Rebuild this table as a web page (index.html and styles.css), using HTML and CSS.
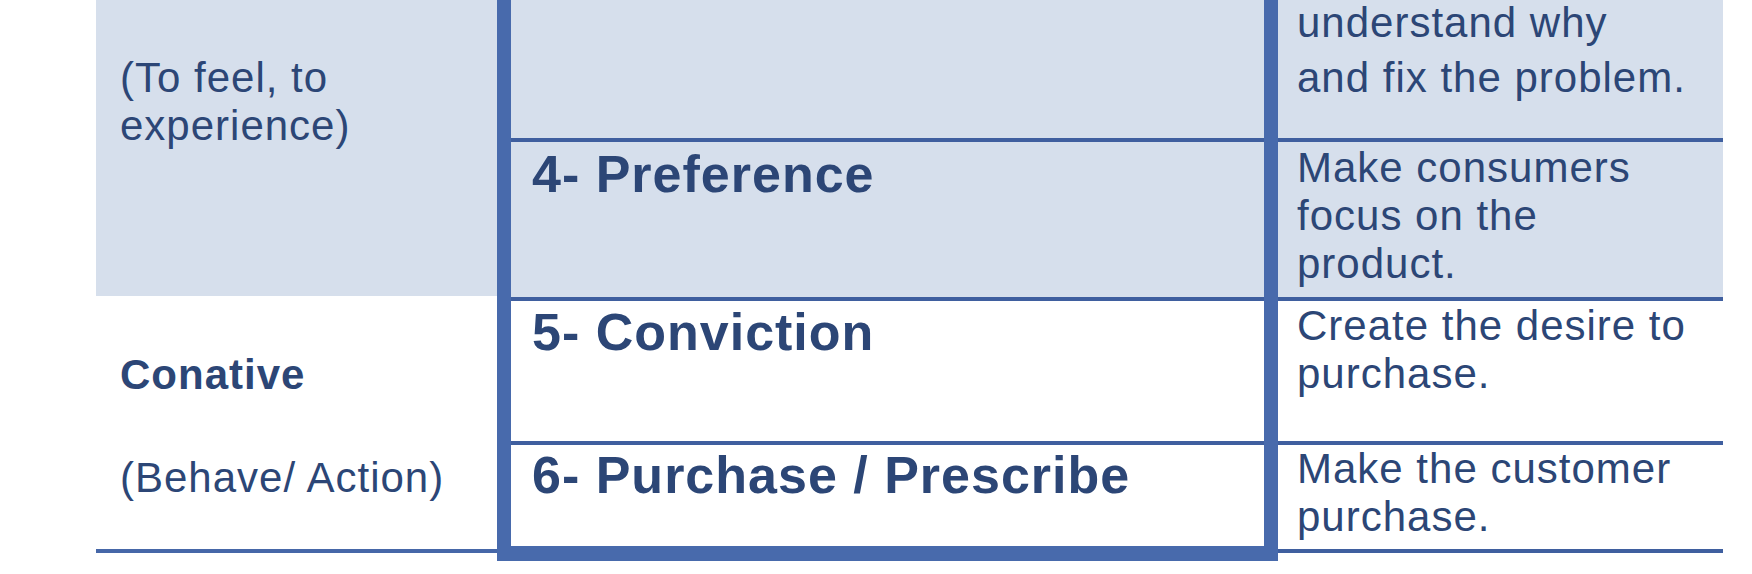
FILE: index.html
```html
<!DOCTYPE html>
<html lang="en">
<head>
<meta charset="utf-8">
<title>Hierarchy of effects</title>
<link rel="stylesheet" href="styles.css">
</head>
<body>
<div class="table">
  <div class="col col-left">
    <div class="cell l-aff">
      <div class="cat">Affective</div>
      <div class="note">(To feel, to<br>experience)</div>
    </div>
    <div class="cell l-con">
      <div class="cat">Conative</div>
      <div class="note">(Behave/ Action)</div>
    </div>
  </div>
  <div class="col col-mid">
    <div class="cell m-row row-a shade"></div>
    <div class="cell m-row row-b shade"><div class="stage">4- Preference</div></div>
    <div class="cell m-row row-c"><div class="stage">5- Conviction</div></div>
    <div class="cell m-row row-d"><div class="stage">6- Purchase / Prescribe</div></div>
  </div>
  <div class="col col-right">
    <div class="cell r-row row-a shade"><div class="note loose">understand why<br>and fix the problem.</div></div>
    <div class="cell r-row row-b shade"><div class="note">Make consumers<br>focus on the<br>product.</div></div>
    <div class="cell r-row row-c"><div class="note">Create the desire to<br>purchase.</div></div>
    <div class="cell r-row row-d"><div class="note">Make the customer<br>purchase.</div></div>
  </div>
</div>
</body>
</html>
```
FILE: styles.css
```css
html, body {
  margin: 0;
  background: #ffffff;
}
body {
  font-family: "Liberation Sans", Arial, Helvetica, sans-serif;
  color: #2c4676;
  overflow: hidden;
}
.table {
  display: flex;
  align-items: flex-start;
  padding-left: 96px;
}
.col {
  display: flex;
  flex-direction: column;
  box-sizing: border-box;
}
.cell {
  display: flex;
  flex-direction: column;
  box-sizing: border-box;
  white-space: nowrap;
}
.shade {
  background: #d6dfec;
}

/* left column */
.col-left {
  width: 401px;
}
.l-aff {
  height: 296px;
  background: #d6dfec;
  padding-left: 24px;
}
.l-con {
  height: 257px;
  padding: 55px 0 0 24px;
  border-bottom: 4px solid #4667a8;
}
.cat {
  font-size: 42px;
  font-weight: 700;
  line-height: 48px;
  letter-spacing: 1px;
}
.note {
  font-size: 42px;
  line-height: 48px;
  letter-spacing: 1px;
}
.l-aff .cat {
  margin-top: -40px;
  opacity: 0.35;
}
.l-aff .note {
  margin-top: 46px;
}
.l-con .note {
  margin-top: 55px;
}

/* middle column */
.col-mid {
  width: 781px;
  border-left: 14px solid #486aac;
  border-right: 14px solid #486aac;
  border-bottom: 15px solid #486aac;
}
.m-row {
  padding-left: 21px;
  border-bottom: 4px solid #3f5f9f;
}
.stage {
  font-size: 52px;
  font-weight: 700;
  line-height: 60px;
  letter-spacing: 1px;
}
.row-a { height: 142px; }
.row-b { height: 159px; }
.row-c { height: 144px; }
.m-row.row-b { padding-top: 2px; }
.m-row.row-c { padding-top: 1px; }
.m-row.row-d {
  height: 101px;
  border-bottom: none;
}

/* right column */
.col-right {
  width: 445px;
}
.r-row {
  padding-left: 19px;
  border-bottom: 4px solid #3f5f9f;
}
.r-row .loose {
  line-height: 55px;
  margin-top: -5px;
}
.r-row.row-b { padding-top: 1.5px; }
.r-row.row-c { padding-top: 1px; }
.r-row.row-d { height: 108px; }
```
